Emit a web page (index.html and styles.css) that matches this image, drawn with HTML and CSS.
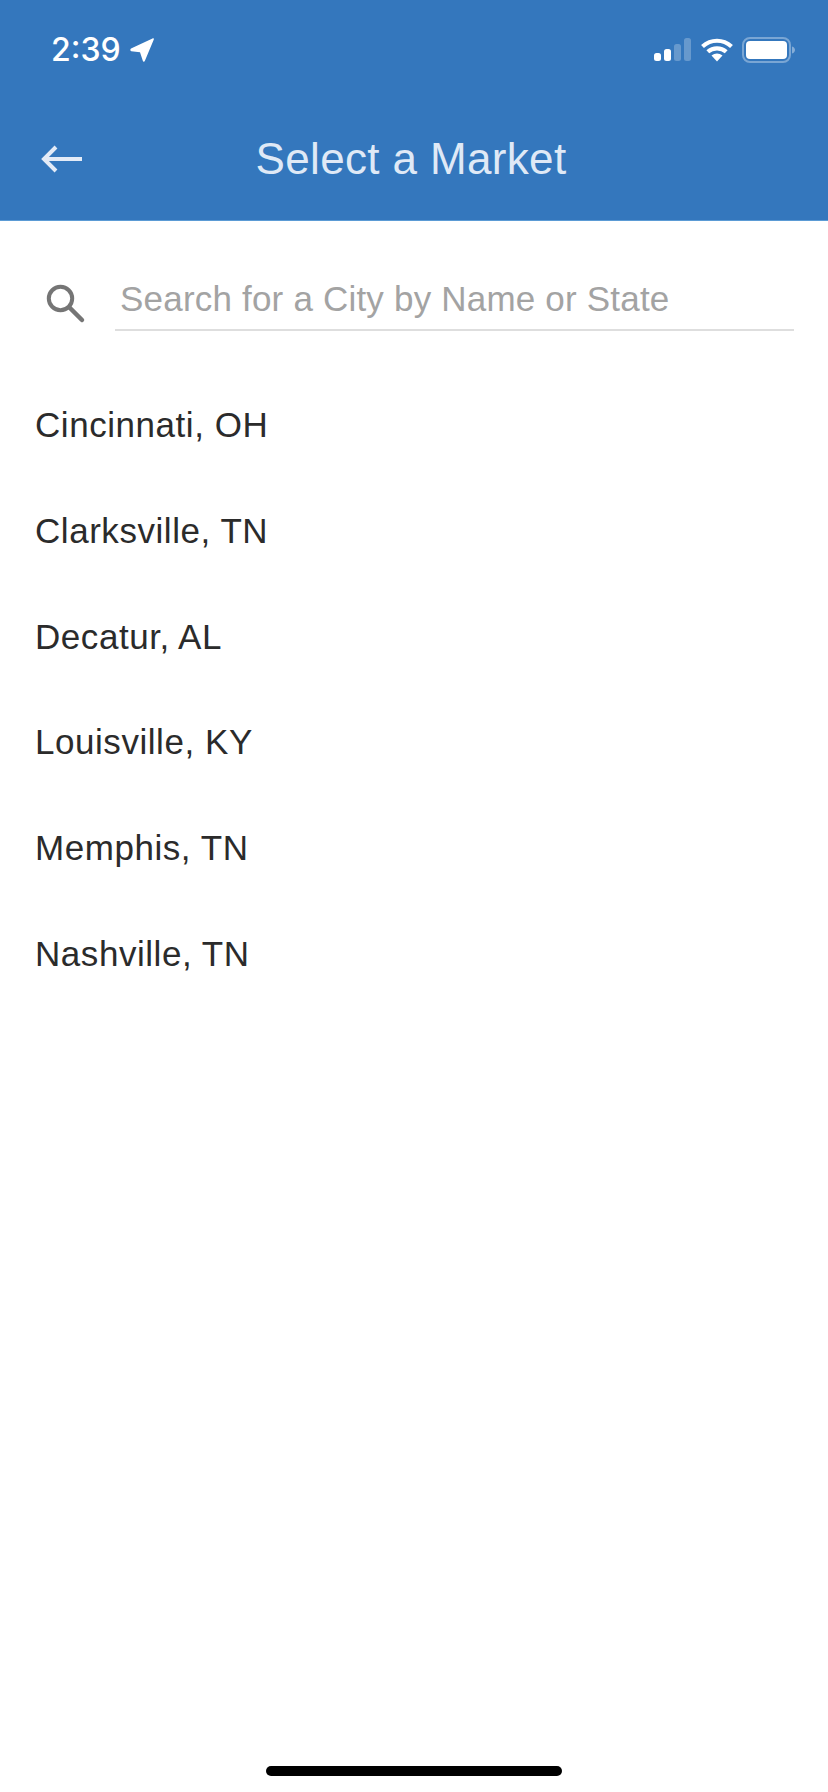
FILE: index.html
```html
<!DOCTYPE html>
<html lang="en">
<head>
<meta charset="utf-8">
<title>Select a Market</title>
<link rel="stylesheet" href="styles.css">
</head>
<body>
<div class="screen">
  <header class="header">
    <div class="status">
      <div class="status-left">
        <span class="time">2:39</span>
        <svg class="loc" width="26" height="26" viewBox="0 0 26 26"><path d="M2 11.500 23.500 1.500c.9-.4 1.600.2 1.300 1.100L15.800 24c-.4 1-1.800.9-2-.2L11 15.200 2.300 14.200c-1.200-.1-1.300-2-.3-2.700Z" fill="#fff"/></svg>
      </div>
      <div class="status-right">
        <svg width="38" height="24" viewBox="0 0 38 24"><rect x="0" y="15" width="7" height="8" rx="2.500" fill="#fff"/><rect x="10" y="11" width="7" height="12" rx="2.500" fill="#fff"/><rect x="20" y="6" width="7" height="17" rx="2.500" fill="#fff" fill-opacity=".25"/><rect x="30" y="0" width="7" height="23" rx="2.500" fill="#fff" fill-opacity=".25"/></svg>
        <svg width="32" height="24" viewBox="0 0 32 24"><path d="M1.500 8.500C10 .8 22 .8 30.500 8.500M6.800 13.800C12 9.200 20 9.200 25.200 13.800" fill="none" stroke="#fff" stroke-width="4.200"/><path d="M10.500 17.500C14 14.700 18 14.700 21.500 17.500L16 23.500Z" fill="#fff"/></svg>
        <svg class="batt" width="54" height="26" viewBox="0 0 54 26"><rect x="1" y="1" width="47" height="24" rx="7" fill="none" stroke="#fff" stroke-opacity=".35" stroke-width="2"/><rect x="4" y="4" width="41" height="18" rx="4" fill="#fff"/><path d="M50 9.500c2.200.6 3 2 3 3.500s-.8 2.900-3 3.500Z" fill="#fff" fill-opacity=".4"/></svg>
      </div>
    </div>
    <div class="nav">
      <svg class="back" width="42" height="28" viewBox="0 0 42 28"><path d="M41 14H4M15 2 3 14l12 12" fill="none" stroke="#e3ebf7" stroke-width="4"/></svg>
      <h1 class="title">Select a Market</h1>
    </div>
  </header>
  <div class="search">
    <svg class="search-icon" width="42" height="42" viewBox="0 0 42 42"><circle cx="16.500" cy="16.500" r="11.700" fill="none" stroke="#757575" stroke-width="4"/><path d="M25.500 25.500l12.500 12.500" stroke="#757575" stroke-width="4.500" stroke-linecap="round"/></svg>
    <div class="field">Search for a City by Name or State</div>
  </div>
  <ul class="list">
    <li class="item">Cincinnati, OH</li>
    <li class="item">Clarksville, TN</li>
    <li class="item">Decatur, AL</li>
    <li class="item">Louisville, KY</li>
    <li class="item">Memphis, TN</li>
    <li class="item">Nashville, TN</li>
  </ul>
  <div class="home"></div>
</div>
</body>
</html>
```
FILE: styles.css
```css
* { box-sizing: border-box; }
html, body { margin: 0; padding: 0; background: #fff; }
body { font-family: "Liberation Sans", Arial, sans-serif; }
.screen { width: 828px; height: 1792px; display: flex; flex-direction: column; overflow: hidden; }
.header { height: 221px; background: #3477bd; border-bottom: 1px solid #5b9bd5; flex: none; }
.status { height: 121px; padding: 31px 32px 0 51px; display: flex; justify-content: space-between; align-items: flex-start; }
.status-left { display: flex; align-items: center; gap: 8px; height: 38px; }
.time { color: #fff; font-family: Inter, "Liberation Sans", sans-serif; font-weight: 500; font-size: 32px; line-height: 38px; }
.status-right { display: flex; align-items: center; gap: 9px; height: 38px; }
.nav { height: 76px; padding-left: 41px; display: flex; align-items: center; position: relative; }
.title { position: absolute; left: 0; width: 822px; margin: 0; text-align: center; font-weight: 400; font-size: 44px; letter-spacing: .35px; line-height: 76px; color: #dfe9f6; }
.search { height: 110px; padding: 0 34px 0 44px; display: flex; align-items: flex-start; flex: none; }
.search-icon { margin-top: 61px; flex: none; }
.field { flex: 1; margin-left: 29px; margin-top: 60px; height: 50px; padding-left: 5px; line-height: 36px; font-size: 35px; letter-spacing: .2px; color: #a3a3a3; border-bottom: 2px solid #dedede; }
.list { list-style: none; margin: 0; padding: 41px 0 0 35px; }
.item { height: 105.800px; line-height: 105.800px; font-size: 35px; letter-spacing: .55px; color: #2b2b2b; }
.home { position: absolute; left: 266px; top: 1766px; width: 296px; height: 10px; border-radius: 5px; background: #000; }
```
